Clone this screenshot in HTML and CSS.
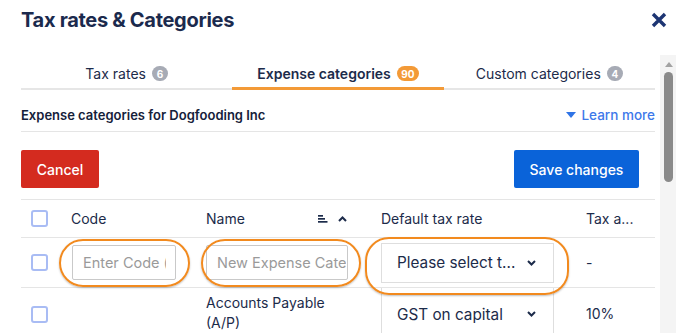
FILE: index.html
```html
<!DOCTYPE html>
<html>
<head>
<meta charset="utf-8">
<link rel="stylesheet" href="styles.css">
</head>
<body>
<div class="page">
  <header class="header">
    <h1 class="title">Tax rates &amp; Categories</h1>
    <button class="close" aria-label="Close">
      <svg width="16" height="16" viewBox="0 0 16 16"><path d="M2 2 L14 14 M14 2 L2 14" stroke="#1d3573" stroke-width="3.4" stroke-linecap="butt" fill="none"/></svg>
    </button>
  </header>
  <div class="body">
    <main class="main">
      <nav class="tabs">
        <div class="tab">Tax rates <span class="badge">6</span></div>
        <div class="tab active">Expense categories <span class="badge orange">90</span></div>
        <div class="tab">Custom categories <span class="badge">4</span></div>
      </nav>
      <div class="subhead">
        <div class="subtitle">Expense categories for Dogfooding Inc</div>
        <a class="learn">
          <svg width="10" height="6" viewBox="0 0 10 6"><path d="M0 0 L10 0 L5 6 Z" fill="#2f74e6"/></svg>
          Learn more
        </a>
      </div>
      <div class="actions">
        <button class="btn cancel">Cancel</button>
        <button class="btn save">Save changes</button>
      </div>
      <div class="table">
        <div class="row head">
          <div class="cell"><span class="check"></span></div>
          <div class="cell">Code</div>
          <div class="cell namehead">
            <span>Name</span>
            <span class="sorts">
              <svg width="10" height="8" viewBox="0 0 10 8"><rect x="0" y="0" width="5" height="1.7" fill="#1c2b4a"/><rect x="0" y="3" width="7" height="1.7" fill="#1c2b4a"/><rect x="0" y="6" width="9.5" height="1.7" fill="#1c2b4a"/></svg>
              <svg width="9" height="6" viewBox="0 0 9 6"><path d="M1 5 L4.5 1.5 L8 5" stroke="#1c2b4a" stroke-width="2" fill="none"/></svg>
            </span>
          </div>
          <div class="cell">Default tax rate</div>
          <div class="cell">Tax a...</div>
        </div>
        <div class="row newrow">
          <div class="cell"><span class="check"></span></div>
          <div class="cell"><span class="ring ring-code"></span><input class="input code" placeholder="Enter Code (optional)"></div>
          <div class="cell"><span class="ring ring-name"></span><input class="input name" placeholder="New Expense Category"></div>
          <div class="cell"><span class="ring ring-tax"></span>
            <div class="select"><span>Please select t...</span>
              <svg width="9" height="6" viewBox="0 0 9 6"><path d="M1 1 L4.5 4.5 L8 1" stroke="#1c2b4a" stroke-width="2" fill="none"/></svg>
            </div>
          </div>
          <div class="cell val">-</div>
        </div>
        <div class="row datarow">
          <div class="cell"><span class="check"></span></div>
          <div class="cell"></div>
          <div class="cell acct">Accounts Payable (A/P)</div>
          <div class="cell">
            <div class="select tall"><span>GST on capital</span>
              <svg width="9" height="6" viewBox="0 0 9 6"><path d="M1 1 L4.5 4.5 L8 1" stroke="#1c2b4a" stroke-width="2" fill="none"/></svg>
            </div>
          </div>
          <div class="cell val">10%</div>
        </div>
      </div>
    </main>
    <aside class="scrollbar">
      <svg class="sb-arrow" width="10" height="6" viewBox="0 0 10 6"><path d="M1 6 L5 1 L9 6 Z" fill="#a3a3a3"/></svg>
      <div class="sb-thumb"></div>
    </aside>
  </div>
</div>
</body>
</html>
```

FILE: styles.css
```css
* { box-sizing: border-box; }
html, body { margin: 0; padding: 0; background: #fff; }
body {
  font-family: Inter, "Noto Sans", sans-serif;
  color: #1c2b4a;
  width: 676px;
  height: 333px;
  overflow: hidden;
}
.page { display: flex; flex-direction: column; height: 333px; }
.header {
  height: 40px;
  margin-bottom: 15px;
  display: flex;
  align-items: center;
  justify-content: space-between;
  padding: 0 9px 0 21px;
}
.title {
  margin: 0;
  font-size: 20px;
  font-weight: 700;
  letter-spacing: -0.3px;
  color: #1b2a4d;
}
.close {
  border: 0;
  background: none;
  padding: 0;
  width: 16px;
  height: 16px;
  display: flex;
}
.body { display: flex; flex: 1; min-height: 0; }
.main { width: 660px; padding: 0 5px 0 21px; }
.scrollbar {
  width: 16px;
  background: #f4f4f4;
  display: flex;
  flex-direction: column;
  align-items: center;
  padding-top: 6px;
}
.sb-arrow { display: block; margin-left: 1px; }
.sb-thumb {
  margin-top: 5px;
  width: 9px;
  height: 110px;
  border-radius: 5px;
  background: #8a8a8a;
  margin-left: 1px;
}
.tabs {
  display: flex;
  border-bottom: 2px solid #e6e6e6;
}
.tab {
  flex: 1;
  height: 33px;
  padding-top: 4px;
  display: flex;
  align-items: center;
  justify-content: center;
  gap: 6px;
  font-size: 14px;
  color: #1c2b4a;
  position: relative;
}
.tab.active { font-weight: 600; }
.tab.active::after {
  content: "";
  position: absolute;
  left: 0; right: 0; bottom: -2px;
  height: 3px;
  background: #f39a37;
}
.badge {
  display: inline-flex;
  align-items: center;
  justify-content: center;
  min-width: 16px;
  height: 15px;
  padding: 0 4px;
  border-radius: 8px;
  background: #a7abb5;
  color: #fff;
  font-size: 10px;
  font-weight: 700;
}
.badge.orange { background: #f39a37; min-width: 22px; }
.subhead {
  display: flex;
  justify-content: space-between;
  align-items: center;
  padding: 15px 0 6px;
  line-height: 20px;
  border-bottom: 1px solid #e5e5e5;
}
.subtitle { font-size: 13px; font-weight: 600; color: #15213a; }
.learn {
  display: flex;
  align-items: center;
  gap: 5px;
  color: #3d78ea;
  font-size: 13.5px;
  font-weight: 500;
}
.actions {
  display: flex;
  justify-content: space-between;
  padding: 18px 16px 11px 0;
  border-bottom: 1px solid #e5e5e5;
}
.btn {
  height: 38px;
  border: 0;
  border-radius: 2px;
  color: #fff;
  font-family: Inter, sans-serif;
  font-size: 14px;
  font-weight: 500;
  padding: 0;
  white-space: nowrap;
}
.cancel { background: #d42b1f; width: 78px; }
.save { background: #0a63d9; width: 125px; }
.row {
  display: grid;
  grid-template-columns: 40px 135px 175px 205px 79px;
  border-bottom: 1px solid #e5e5e5;
}
.cell {
  padding-left: 10px;
  display: flex;
  align-items: center;
  position: relative;
  font-size: 14px;
  min-width: 0;
  white-space: nowrap;
}
.head { height: 38px; }
.newrow { height: 50px; }
.datarow { height: 60px; border-bottom: 0; align-items: start; }
.check {
  width: 17px;
  height: 17px;
  border: 2.5px solid #a9bcf4;
  border-radius: 3px;
  display: block;
}
.namehead { justify-content: space-between; padding-right: 24px; }
.sorts { display: flex; align-items: center; gap: 10px; }
.input {
  height: 35px;
  border: 1px solid #c9c9c9;
  border-radius: 2px;
  font-family: Inter, sans-serif;
  font-size: 14.5px;
  padding: 0 1px 0 10px;
  color: #1c2b4a;
  position: relative;
  z-index: 1;
  background: #fff;
}
.input::placeholder { color: #9a9a9a; }
.input.code { width: 104px; margin-left: 1px; padding-right: 9px; }
.input.name { width: 142px; }
.select {
  width: 173px;
  height: 40px;
  border: 1px solid #dedede;
  display: flex;
  align-items: center;
  justify-content: space-between;
  padding: 0 17px 0 15px;
  font-size: 15.3px;
  color: #1c2b4a;
  position: relative;
  z-index: 1;
  background: #fff;
}
.select.tall { height: 60px; border-top: 0; border-bottom: 0; padding-bottom: 8px; }
.ring {
  position: absolute;
  border: 2px solid #f28a1e;
  border-radius: 24px;
  box-shadow: 0 1px 2px rgba(0,0,0,0.25);
  z-index: 2;
}
.ring-code { left: -2px; top: 1px; width: 131px; height: 48px; }
.ring-name { left: 5px; top: 1px; width: 160px; height: 48px; }
.ring-tax { left: -6px; top: -1px; width: 204px; height: 58px; }
.val { font-size: 14px; }
.datarow .cell { align-items: flex-start; padding-top: 0; }
.datarow .cell:first-child { padding-top: 18px; }
.acct { line-height: 20px; padding-top: 5px !important; padding-right: 22px; white-space: normal; }
.datarow .val { padding-top: 17px; }
```
